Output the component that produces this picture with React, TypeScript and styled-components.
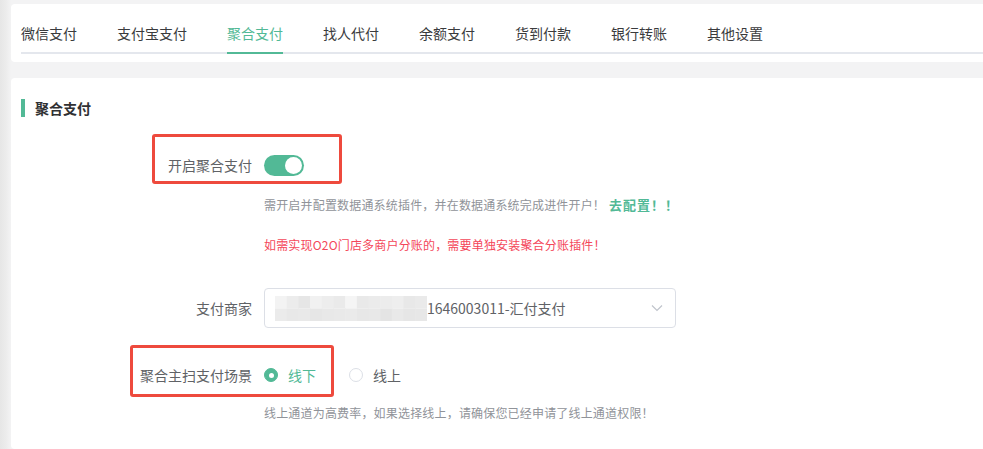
import { useState } from 'react'
import styled, { createGlobalStyle } from 'styled-components'

const GREEN = '#52b996'
const RED_MARK = '#ee4a3d'

const GlobalStyle = createGlobalStyle`
  html, body {
    margin: 0;
    padding: 0;
  }
  body {
    background: linear-gradient(to right, #e6e6e6 0, #ececec 6px, #f3f3f4 11px);
    font-family: "Microsoft YaHei", "Noto Sans CJK SC", "Noto Sans", sans-serif;
    overflow: hidden;
  }
`

const Page = styled.div`
  display: flex;
  flex-direction: column;
  gap: 16px;
  padding: 4px 0 0 11px;
  height: 449px;
  box-sizing: border-box;
`

const Card = styled.div`
  background: #fff;
  border-radius: 4px 0 0 4px;
  padding: 10px 0 8px 10px;
`

const MainCard = styled(Card)`
  flex: 1;
  padding: 21px 0 0 0;
`

const TabBar = styled.div`
  display: flex;
  gap: 40px;
  border-bottom: 2px solid #e4e7ed;
`

const Tab = styled.button<{ $active?: boolean }>`
  all: unset;
  height: 40px;
  box-sizing: border-box;
  margin-bottom: -2px;
  border-bottom: 2px solid ${(p) => (p.$active ? GREEN : 'transparent')};
  font-size: 14px;
  line-height: 38px;
  color: ${(p) => (p.$active ? GREEN : '#3a3b3d')};
  cursor: pointer;
`

const SectionTitle = styled.div`
  display: flex;
  align-items: center;
  gap: 10px;
  height: 18px;
  padding-left: 10px;
  font-size: 14px;
  font-weight: bold;
  color: #303133;

  &::before {
    content: '';
    width: 4px;
    height: 18px;
    background: ${GREEN};
  }
`

const FormItem = styled.div<{ $top: number }>`
  position: relative;
  display: grid;
  grid-template-columns: 253px 1fr;
  margin-top: ${(p) => p.$top}px;
`

const Label = styled.div`
  height: 40px;
  line-height: 40px;
  padding-right: 12px;
  text-align: right;
  font-size: 14px;
  color: #606266;
`

const Content = styled.div`
  display: flex;
  flex-direction: column;
  align-items: flex-start;
`

const Control = styled.div`
  display: flex;
  align-items: center;
  height: 40px;
`

const Tip = styled.div<{ $danger?: boolean; $top: number }>`
  margin-top: ${(p) => p.$top}px;
  height: 20px;
  line-height: 20px;
  font-size: 12px;
  letter-spacing: 0.18px;
  color: ${(p) => (p.$danger ? '#f4475a' : '#909399')};
  white-space: nowrap;
`

const TipLink = styled.a`
  margin-left: 4px;
  font-size: 13px;
  font-weight: bold;
  color: ${GREEN};
  text-decoration: none;
  letter-spacing: 1px;
`

const Mark = styled.div<{ $left: number; $top: number; $w: number; $h: number }>`
  position: absolute;
  left: ${(p) => p.$left}px;
  top: ${(p) => p.$top}px;
  width: ${(p) => p.$w}px;
  height: ${(p) => p.$h}px;
  box-sizing: border-box;
  border: 3px solid ${RED_MARK};
  border-radius: 3px;
  pointer-events: none;
`

const SwitchTrack = styled.button<{ $on: boolean }>`
  all: unset;
  position: relative;
  width: 40px;
  height: 21px;
  border-radius: 11px;
  background: ${(p) => (p.$on ? GREEN : '#dcdfe6')};
  cursor: pointer;
`

const SwitchKnob = styled.span<{ $on: boolean }>`
  position: absolute;
  top: 2px;
  left: ${(p) => (p.$on ? '21px' : '2px')};
  width: 17px;
  height: 17px;
  border-radius: 50%;
  background: #fff;
`

const Select = styled.div`
  display: flex;
  align-items: center;
  width: 412px;
  height: 40px;
  box-sizing: border-box;
  padding: 0 12px 0 10px;
  border: 1px solid #dcdfe6;
  border-radius: 4px;
  font-size: 14px;
  color: #606266;
`

const SelectValue = styled.span`
  flex: 1;
  display: flex;
  align-items: center;
`

const RadioGroup = styled.div`
  display: flex;
  align-items: center;
  gap: 33px;
`

const RadioItem = styled.label<{ $checked: boolean }>`
  display: flex;
  align-items: center;
  gap: 10px;
  font-size: 14px;
  color: ${(p) => (p.$checked ? GREEN : '#606266')};
  cursor: pointer;
`

const RadioDot = styled.span<{ $checked: boolean }>`
  width: 14px;
  height: 14px;
  box-sizing: border-box;
  border-radius: 50%;
  border: 1px solid ${(p) => (p.$checked ? GREEN : '#dcdfe6')};
  background: ${(p) => (p.$checked ? GREEN : '#fff')};
  display: flex;
  align-items: center;
  justify-content: center;

  &::after {
    content: '';
    width: 5px;
    height: 5px;
    border-radius: 50%;
    background: #fff;
    display: ${(p) => (p.$checked ? 'block' : 'none')};
  }
`

const tabs = ['微信支付', '支付宝支付', '聚合支付', '找人代付', '余额支付', '货到付款', '银行转账', '其他设置']

const mosaic = [
  ['#f3f3f3', '#ececec', '#e6e6e6', '#f1f1f1', '#ededed', '#eaeaea', '#f5f5f5', '#e9e9e9', '#ebebeb', '#ececec', '#eeeeee', '#e8e8e8', '#eaeaea'],
  ['#ebebeb', '#e8e8e8', '#e9e9e9', '#e6e6e6', '#e8e8e8', '#e9e9e9', '#eaeaea', '#e7e7e7', '#e8e8e8', '#e4e4e4', '#e9e9e9', '#e6e6e6', '#e7e7e7'],
]

function Mosaic() {
  const cw = 152 / 13
  return (
    <svg width="152" height="25" viewBox="0 0 152 25" style={{ display: 'block' }}>
      {mosaic.map((row, r) =>
        row.map((c, i) => (
          <rect key={`${r}-${i}`} x={i * cw} y={r * 12.5} width={cw + 0.5} height={12.5} fill={c} />
        )),
      )}
    </svg>
  )
}

function Chevron() {
  return (
    <svg width="12" height="8" viewBox="0 0 12 8" fill="none">
      <path d="M1 1.5 L6 6.5 L11 1.5" stroke="#c0c4cc" strokeWidth="1.2" />
    </svg>
  )
}

export default function App() {
  const [active, setActive] = useState(2)
  const [on, setOn] = useState(true)
  const [scene, setScene] = useState<'offline' | 'online'>('offline')

  return (
    <>
      <GlobalStyle />
      <Page>
        <Card>
          <TabBar>
            {tabs.map((t, i) => (
              <Tab key={t} $active={i === active} onClick={() => setActive(i)} type="button">
                {t}
              </Tab>
            ))}
          </TabBar>
        </Card>

        <MainCard>
          <SectionTitle>聚合支付</SectionTitle>

          <FormItem $top={28}>
            <Label>开启聚合支付</Label>
            <Content>
              <Control>
                <SwitchTrack $on={on} onClick={() => setOn(!on)} type="button">
                  <SwitchKnob $on={on} />
                </SwitchTrack>
              </Control>
              <Tip $top={10}>
                需开启并配置数据通系统插件，并在数据通系统完成进件开户！
                <TipLink href="#">去配置！！</TipLink>
              </Tip>
              <Tip $top={20} $danger>
                如需实现O2O门店多商户分账的，需要单独安装聚合分账插件！
              </Tip>
            </Content>
            <Mark $left={141} $top={-11} $w={190} $h={50} />
          </FormItem>

          <FormItem $top={33}>
            <Label>支付商家</Label>
            <Content>
              <Select>
                <SelectValue>
                  <Mosaic />
                  <span>1646003011-汇付支付</span>
                </SelectValue>
                <Chevron />
              </Select>
            </Content>
          </FormItem>

          <FormItem $top={27}>
            <Label>聚合主扫支付场景</Label>
            <Content>
              <Control>
                <RadioGroup>
                  <RadioItem $checked={scene === 'offline'} onClick={() => setScene('offline')}>
                    <RadioDot $checked={scene === 'offline'} />
                    线下
                  </RadioItem>
                  <RadioItem $checked={scene === 'online'} onClick={() => setScene('online')}>
                    <RadioDot $checked={scene === 'online'} />
                    线上
                  </RadioItem>
                </RadioGroup>
              </Control>
              <Tip $top={8}>线上通道为高费率，如果选择线上，请确保您已经申请了线上通道权限！</Tip>
            </Content>
            <Mark $left={119} $top={-10} $w={204} $h={52} />
          </FormItem>
        </MainCard>
      </Page>
    </>
  )
}
